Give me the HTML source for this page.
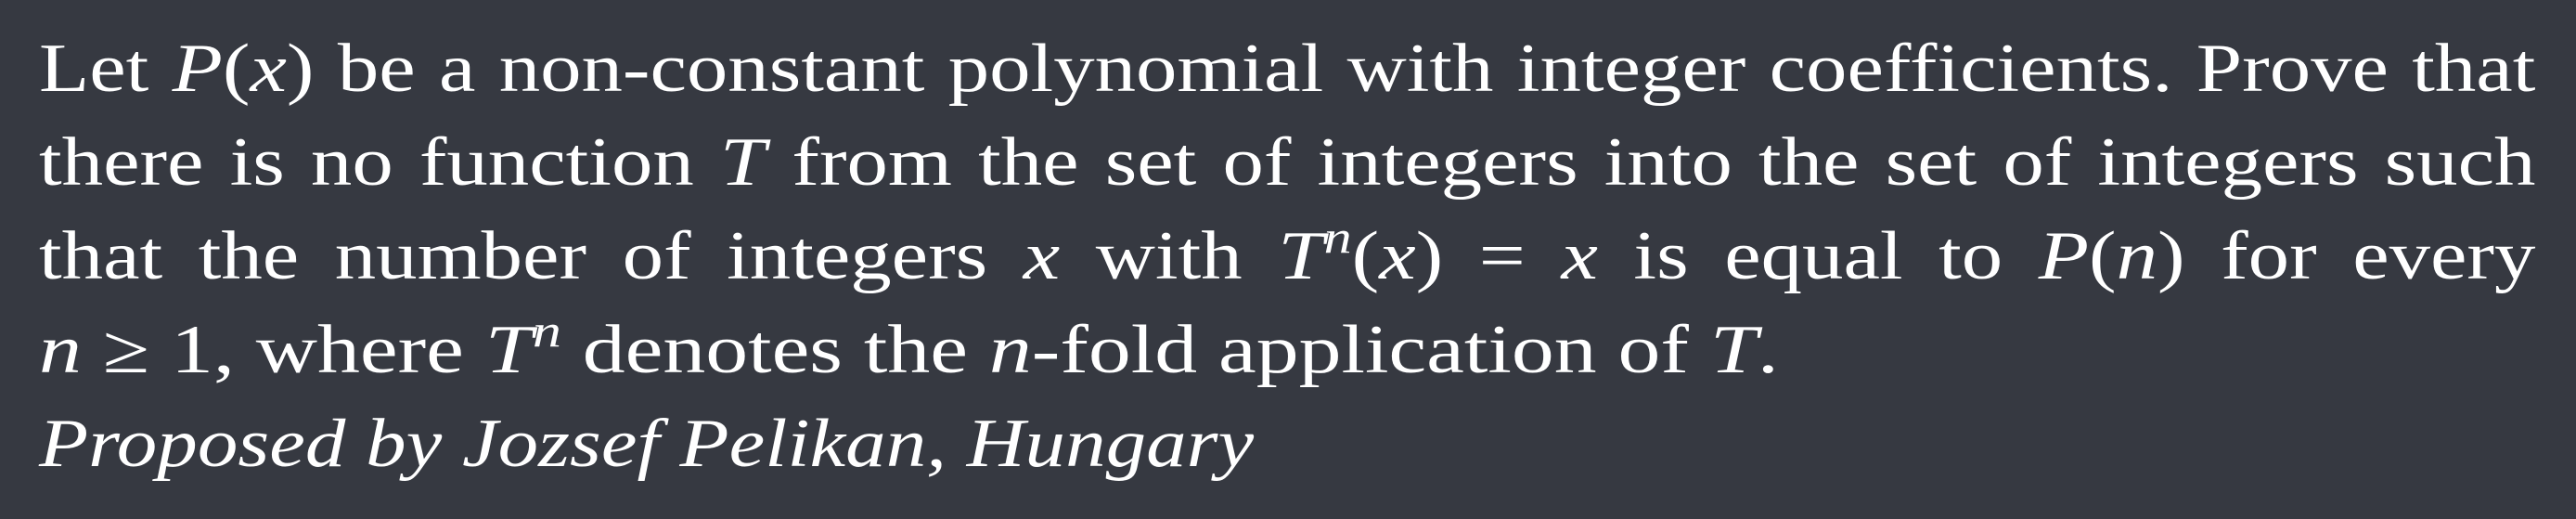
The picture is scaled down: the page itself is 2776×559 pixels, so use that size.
<!DOCTYPE html>
<html><head><meta charset="utf-8"><style>
html,body{margin:0;padding:0;background:#363941;}
body{width:2776px;height:559px;overflow:hidden;}
.w{position:absolute;left:42px;top:24px;width:2242px;font-family:"Liberation Serif",serif;font-size:74px;line-height:101px;color:#fff;transform:scaleX(1.2);transform-origin:0 0;}
.l{display:block;text-align:justify;text-align-last:justify;white-space:nowrap;}
.n{display:block;text-align:left;white-space:nowrap;transform:scaleX(1.033);transform-origin:0 0;}
.p{display:block;white-space:nowrap;transform:scaleX(0.98);transform-origin:0 0;}
i{font-style:italic;}
sup{font-size:50px;line-height:0;vertical-align:28px;font-style:italic;}
</style></head><body>
<div class="w">
<div class="l">Let <i>P</i>(<i>x</i>) be a non-constant polynomial with integer coefficients. Prove that</div>
<div class="l">there is no function <i>T</i> from the set of integers into the set of integers such</div>
<div class="l">that the number of integers <i>x</i> with <i>T</i><sup>n</sup>(<i>x</i>) = <i>x</i> is equal to <i>P</i>(<i>n</i>) for every</div>
<div class="n"><i>n</i> ≥ 1, where <i>T</i><sup>n</sup> denotes the <i>n</i>-fold application of <i>T</i>.</div>
<div class="p"><i>Proposed by Jozsef Pelikan, Hungary</i></div>
</div>
</body></html>
